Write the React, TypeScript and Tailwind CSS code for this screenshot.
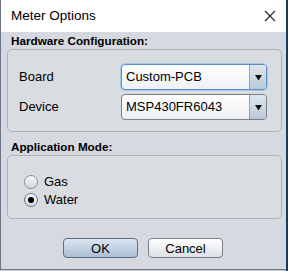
import React from 'react';

const font = { fontFamily: '"Liberation Sans", Arial, sans-serif' };

const Combo: React.FC<{ value: string; focused?: boolean }> = ({ value, focused }) => (
  <div
    className={`flex h-[26px] w-[146px] rounded-[4px] border ${
      focused ? 'border-[#5b8fc4] shadow-[0_0_0_1px_#a9c8e6]' : 'border-[#7a7f86]'
    } bg-gradient-to-b from-white to-[#eef0f3] overflow-hidden`}
  >
    <div className="flex flex-1 items-center pl-[4px] text-[13px] text-black">{value}</div>
    <div className="flex w-[17px] items-center justify-center border-l border-[#9aa3ad] bg-gradient-to-b from-[#dfe7ef] to-[#b9c9d8]">
      <svg width="7" height="7" viewBox="0 0 7 7">
        <path d="M0 1 L7 1 L3.5 6.5 Z" fill="#111" />
      </svg>
    </div>
  </div>
);

const Radio: React.FC<{ label: string; checked?: boolean }> = ({ label, checked }) => (
  <div className="flex h-[18px] items-center gap-[6px]">
    <div
      className={`flex h-[14px] w-[14px] shrink-0 items-center justify-center rounded-full border ${
        checked ? 'border-[#66778b]' : 'border-[#8a9098]'
      } bg-gradient-to-b from-[#f6f7f9] to-[#d3d8de]`}
    >
      {checked && <div className="h-[6px] w-[6px] rounded-full bg-black" />}
    </div>
    <span className="text-[13px] text-black">{label}</span>
  </div>
);

const App: React.FC = () => {
  return (
    <div className="flex h-[271px] w-[288px] bg-[#c9cacc]" style={font}>
      <div className="flex h-[270px] w-[286px] flex-col border-l border-b border-[#6c7686] bg-[#d6d9df]">
        {/* Title bar */}
        <div className="flex h-[32px] items-center justify-between bg-white pl-[10px] pr-[10px]">
          <span className="text-[13.5px] text-black">Meter Options</span>
          <svg width="12" height="12" viewBox="0 0 12 12">
            <path d="M1 1 L11 11 M11 1 L1 11" stroke="#222" strokeWidth="1.1" />
          </svg>
        </div>

        <div className="flex flex-col pl-[6px] pr-[4px]">
          {/* Hardware configuration */}
          <div className="flex h-[17px] items-center pl-[4px] text-[11.7px] font-bold text-black">
            Hardware Configuration:
          </div>
          <div className="flex h-[83px] flex-col gap-[4px] rounded-[5px] border border-[#aeb2b8] bg-[#d9dce1] pl-[11px] pt-[14px]">
            <div className="flex items-center">
              <span className="w-[102px] text-[13px] text-black">Board</span>
              <Combo value="Custom-PCB" focused />
            </div>
            <div className="flex items-center">
              <span className="w-[102px] text-[13px] text-black">Device</span>
              <Combo value="MSP430FR6043" />
            </div>
          </div>

          {/* Application mode */}
          <div className="mt-[6px] flex h-[17px] items-center pl-[4px] text-[11.7px] font-bold text-black">
            Application Mode:
          </div>
          <div className="flex h-[64px] flex-col rounded-[5px] border border-[#aeb2b8] bg-[#d9dce1] pl-[16px] pt-[17px]">
            <Radio label="Gas" />
            <Radio label="Water" checked />
          </div>

          {/* Buttons */}
          <div className="mt-[19px] flex gap-[10px] pl-[56px]">
            <button className="h-[20px] w-[75px] rounded-[4px] border border-[#5e6f82] bg-gradient-to-b from-[#dbe6f0] to-[#a9bfd4] text-[13px] text-black">
              OK
            </button>
            <button className="h-[20px] w-[75px] rounded-[4px] border border-[#7b8088] bg-gradient-to-b from-white to-[#dde0e5] text-[13px] text-black">
              Cancel
            </button>
          </div>
        </div>
      </div>
      <div className="h-full w-[2px] bg-[#1f3a5c]" />
    </div>
  );
};

export default App;
